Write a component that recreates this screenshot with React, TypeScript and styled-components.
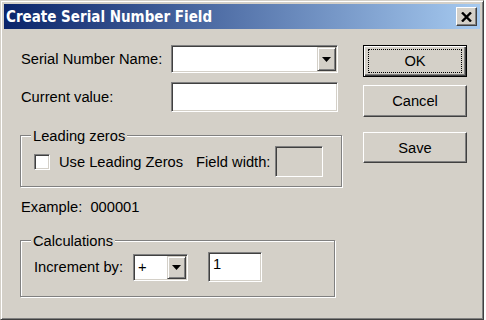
import React from "react";
import styled, { createGlobalStyle } from "styled-components";

const face = "#d4d0c8";

const GlobalStyle = createGlobalStyle`
  html, body { margin: 0; padding: 0; background: #ffffff; }
  body { font-family: "Liberation Sans", Arial, sans-serif; }
  * { box-sizing: border-box; }
`;

const Window = styled.div`
  width: 484px;
  height: 320px;
  background: ${face};
  border: 1px solid;
  border-color: ${face} #404040 #404040 ${face};
  box-shadow: inset 1px 1px 0 #ffffff, inset -1px -1px 0 #808080;
  padding: 3px;
  display: flex;
  flex-direction: column;
  font-size: 14.7px;
  color: #000;
`;

const TitleBar = styled.div`
  height: 25px;
  flex: none;
  display: flex;
  align-items: center;
  padding: 0 3px 0 2px;
  background: linear-gradient(to right, #0a246a, #a6caf0);
`;

const TitleText = styled.span`
  color: #ffffff;
  font-family: "DejaVu Sans Condensed", "DejaVu Sans", Verdana, sans-serif;
  font-weight: bold;
  font-size: 15px;
  white-space: nowrap;
`;

const CloseButton = styled.div`
  margin-left: auto;
  width: 21px;
  height: 19px;
  background: ${face};
  border: 1px solid;
  border-color: #ffffff #404040 #404040 #ffffff;
  box-shadow: inset -1px -1px 0 #808080;
  display: flex;
  align-items: center;
  justify-content: center;
`;

const Body = styled.div`
  flex: 1;
  display: flex;
  padding: 16px 0 0 16px;
`;

const LeftPane = styled.div`
  width: 323px;
  display: flex;
  flex-direction: column;
`;

const RightPane = styled.div`
  width: 104px;
  margin-left: 20px;
  display: flex;
  flex-direction: column;
`;

const FieldRow = styled.div<{ $h: number; $mt?: number }>`
  display: flex;
  align-items: center;
  height: ${(p) => p.$h}px;
  margin-top: ${(p) => p.$mt ?? 0}px;
  padding-left: 1px;
`;

const RowLabel = styled.span`
  width: 150px;
  white-space: nowrap;
`;

const sunken = `
  border: 1px solid;
  border-color: #808080 #ffffff #ffffff #808080;
  box-shadow: inset 1px 1px 0 #404040, inset -1px -1px 0 ${face};
`;

const ComboBox = styled.div<{ $w: number; $h: number; $ml?: number }>`
  ${sunken}
  width: ${(p) => p.$w}px;
  height: ${(p) => p.$h}px;
  margin-left: ${(p) => p.$ml ?? 0}px;
  background: #ffffff;
  padding: 1px;
  display: flex;
  align-items: stretch;
`;

const ComboValue = styled.span`
  flex: 1;
  display: flex;
  align-items: center;
  padding-left: 3px;
`;

const DropButton = styled.div`
  width: 19px;
  background: ${face};
  border: 1px solid;
  border-color: ${face} #404040 #404040 ${face};
  box-shadow: inset 1px 1px 0 #ffffff, inset -1px -1px 0 #808080;
  display: flex;
  align-items: center;
  justify-content: center;
`;

const TextBox = styled.div<{ $w: number; $h: number; $ml?: number; $disabled?: boolean }>`
  ${sunken}
  width: ${(p) => p.$w}px;
  height: ${(p) => p.$h}px;
  margin-left: ${(p) => p.$ml ?? 0}px;
  background: ${(p) => (p.$disabled ? face : "#ffffff")};
  padding: 2px 4px;
  line-height: 18px;
`;

const Group = styled.div<{ $w: number; $mt: number; $pb: number }>`
  width: ${(p) => p.$w}px;
  margin-top: ${(p) => p.$mt}px;
  border: 1px solid #808080;
  box-shadow: 1px 1px 0 #ffffff, inset 1px 1px 0 #ffffff;
  padding: 0 0 ${(p) => p.$pb}px 12px;
  display: flex;
  flex-direction: column;
`;

const GroupTitle = styled.span`
  align-self: flex-start;
  margin: -8px 0 0 -2px;
  padding: 0 2px;
  line-height: 16px;
  background: ${face};
`;

const Checkbox = styled.div`
  ${sunken}
  width: 16px;
  height: 16px;
  background: #ffffff;
  flex: none;
`;

const InlineLabel = styled.span<{ $ml?: number }>`
  margin-left: ${(p) => p.$ml ?? 0}px;
  white-space: nowrap;
`;

const ExampleLine = styled.div`
  margin-top: 12px;
  padding-left: 1px;
  line-height: 16px;
  white-space: pre;
`;

const Button = styled.div<{ $default?: boolean; $mt?: number; $h?: number }>`
  width: 104px;
  height: ${(p) => p.$h ?? 32}px;
  margin-top: ${(p) => p.$mt ?? 0}px;
  background: ${face};
  border: 1px solid;
  border-color: ${(p) => (p.$default ? "#000000" : "#ffffff #404040 #404040 #ffffff")};
  box-shadow: ${(p) =>
    p.$default
      ? "inset 1px 1px 0 #ffffff, inset -1px -1px 0 #404040, inset -2px -2px 0 #808080"
      : "inset -1px -1px 0 #808080"};
  padding: 3px 4px;
  display: flex;
`;

const ButtonFace = styled.span<{ $focus?: boolean }>`
  flex: 1;
  display: flex;
  align-items: center;
  justify-content: center;
  border: 1px ${(p) => (p.$focus ? "dotted #000000" : "solid transparent")};
`;

const Arrow = () => (
  <svg width="9" height="5" viewBox="0 0 9 5">
    <polygon points="0,0 9,0 4.5,5" fill="#000" />
  </svg>
);

const CloseGlyph = () => (
  <svg width="11" height="10" viewBox="0 0 11 10">
    <path d="M1 0.5 L10 9.5 M10 0.5 L1 9.5" stroke="#000" strokeWidth="2.4" />
  </svg>
);

export default function App() {
  return (
    <>
      <GlobalStyle />
      <Window>
        <TitleBar>
          <TitleText>Create Serial Number Field</TitleText>
          <CloseButton>
            <CloseGlyph />
          </CloseButton>
        </TitleBar>
        <Body>
          <LeftPane>
            <FieldRow $h={28}>
              <RowLabel>Serial Number Name:</RowLabel>
              <ComboBox $w={167} $h={28}>
                <ComboValue />
                <DropButton>
                  <Arrow />
                </DropButton>
              </ComboBox>
            </FieldRow>
            <FieldRow $h={30} $mt={9}>
              <RowLabel>Current value:</RowLabel>
              <TextBox $w={167} $h={30} />
            </FieldRow>

            <Group $w={322} $mt={23} $pb={9}>
              <GroupTitle>Leading zeros</GroupTitle>
              <FieldRow $h={31} $mt={2}>
                <Checkbox />
                <InlineLabel $ml={9}>Use Leading Zeros</InlineLabel>
                <InlineLabel $ml={13}>Field width:</InlineLabel>
                <TextBox $w={48} $h={31} $ml={5} $disabled />
              </FieldRow>
            </Group>

            <ExampleLine>Example:  000001</ExampleLine>

            <Group $w={315} $mt={25} $pb={14}>
              <GroupTitle>Calculations</GroupTitle>
              <FieldRow $h={30} $mt={3}>
                <InlineLabel>Increment by:</InlineLabel>
                <ComboBox $w={55} $h={27} $ml={10}>
                  <ComboValue>+</ComboValue>
                  <DropButton>
                    <Arrow />
                  </DropButton>
                </ComboBox>
                <TextBox $w={54} $h={30} $ml={20}>1</TextBox>
              </FieldRow>
            </Group>
          </LeftPane>

          <RightPane>
            <Button $default>
              <ButtonFace $focus>OK</ButtonFace>
            </Button>
            <Button $mt={8}>
              <ButtonFace>Cancel</ButtonFace>
            </Button>
            <Button $mt={15} $h={31}>
              <ButtonFace>Save</ButtonFace>
            </Button>
          </RightPane>
        </Body>
      </Window>
    </>
  );
}
